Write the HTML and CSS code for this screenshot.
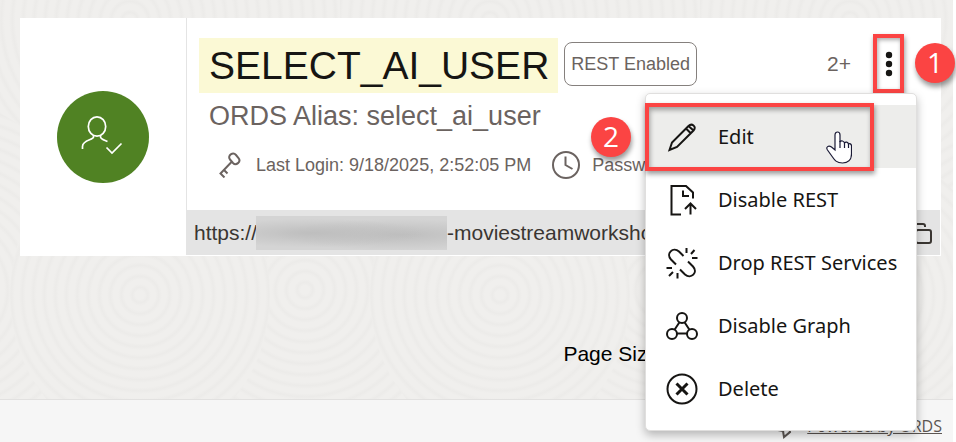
FILE: index.html
```html
<!DOCTYPE html>
<html lang="en">
<head>
<meta charset="utf-8">
<title>Database Users</title>
<link rel="stylesheet" href="styles.css">
</head>
<body>
<div class="page">
  <svg class="texture" aria-hidden="true">
    <defs>
      <radialGradient id="ring" gradientUnits="userSpaceOnUse" cx="150" cy="80" r="11" spreadMethod="repeat">
        <stop offset="0" stop-color="#f0efed"/><stop offset=".4" stop-color="#f0efed"/><stop offset=".7" stop-color="#ecebe9"/><stop offset="1" stop-color="#f0efed"/>
      </radialGradient>
      <pattern id="rings" width="360" height="440" patternUnits="userSpaceOnUse" x="-20" y="0">
        <rect width="360" height="440" fill="#efeeec"/>
        <g fill="url(#ring)">
          <rect width="360" height="440" transform="translate(0 -60)"/>
          <ellipse cx="150" cy="80" rx="170" ry="170" transform="translate(175 210)"/>
          <ellipse cx="150" cy="80" rx="150" ry="190" transform="translate(-185 210)"/>
          <ellipse cx="150" cy="80" rx="130" ry="150" transform="translate(10 215)"/>
        </g>
      </pattern>
    </defs>
    <rect width="100%" height="100%" fill="url(#rings)"/>
  </svg>
  <main class="content">
    <article class="card">
      <div class="portrait">
        <svg class="avatar" viewBox="0 0 92 92" fill="none" stroke="#fff" stroke-width="1.7" role="img" aria-label="Enabled user">
          <circle cx="46" cy="46" r="46" fill="#508223" stroke="none"/>
          <ellipse cx="40" cy="35.500" rx="8.700" ry="9.700"/>
          <path d="M36.500 44.500v1.500c0 3-11 3-11 9.500V58M43.500 44.500v1.500c0 2 3.500 3 7 4.500M49.500 56.500l5.500 5.500 9.500-9.500"/>
        </svg>
      </div>
      <div class="details">
        <div class="summary">
          <header class="heading">
            <h1>SELECT_AI_USER</h1>
            <span class="badge">REST Enabled</span>
            <span class="count">2+</span>
            <div class="actions">
              <button class="more" aria-label="Actions">
                <svg width="8" height="26" viewBox="0 0 8 26" fill="#161513"><circle cx="4" cy="4" r="3.200"/><circle cx="4" cy="13" r="3.200"/><circle cx="4" cy="22" r="3.200"/></svg>
              </button>
              <span class="marker marker-one">1</span>
              <div class="menu">
                <button class="item active">
                  <svg viewBox="0 0 32 32"><path d="M3.500 29l2.500-7.500L22.500 5q2.500-2.500 5-.5t0 5L11 26zM20 7.500l5 5M22.500 5l5 4.500"/></svg>Edit
                </button>
                <button class="item">
                  <svg viewBox="0 0 32 32"><path d="M15 30.500H5.500V2H20l7 6.500v6M17 6.500V12h6M24.500 30.500V19.500M19 25l5.500-5.500L30 25"/></svg>Disable REST
                </button>
                <button class="item">
                  <svg viewBox="0 0 32 32"><path d="M10 17.500L5 12.500C-.5 6.500 7-.5 13 4.500l4.500 4.500M22 14.500l5 5c5.500 6-2 13-8 8l-5-5M20.500 1v5M28.500 3l-3.500 4M26 11h5.500M.500 21H6M7 25l-4 4M11.500 26v5.500"/></svg>Drop REST Services
                </button>
                <button class="item">
                  <svg viewBox="0 0 32 32"><circle cx="16" cy="8" r="5"/><circle cx="6" cy="24" r="5"/><circle cx="26" cy="24" r="5"/><path d="M13.300 12.500L8.700 19.500M18.700 12.500l4.600 7M11 23.500h10"/></svg>Disable Graph
                </button>
                <button class="item">
                  <svg viewBox="0 0 32 32"><circle cx="16" cy="16" r="14.500"/><path class="heavy" d="M10.500 10.500l11 11M21.500 10.500l-11 11"/></svg>Delete
                </button>
                <span class="frame"></span>
                <span class="marker marker-two">2</span>
                <svg class="pointer" viewBox="0 0 26 33"><path d="M9 19V4c0-4 5-4 5 0v7c1-2 4-1 4.500 1 1-1.500 3.500-1 4 1 1-1 3 0 3 2v8c0 6-4 9-9 9-6 0-8-3-10-6l-5-7c-2-3 1-5 4-3z" fill="#fff" stroke="#1a1a35" stroke-width="1.200"/><path d="M14 10v7M18.500 12v5M22.500 13v4" fill="none" stroke="#1a1a35" stroke-width="1.200"/></svg>
              </div>
            </div>
          </header>
          <p class="alias">ORDS Alias: select_ai_user</p>
          <div class="facts">
            <svg class="key" viewBox="0 0 22 26"><path d="M11 7.500c-3-4 3-8 6-4.500l2.500 3c3 4-2.500 8-5.500 5zM12.500 10L1.500 21.500l4 4M5 18l3.500 3.500"/></svg>
            <span class="login">Last Login: 9/18/2025, 2:52:05 PM</span>
            <svg class="clock" viewBox="0 0 28 28"><circle cx="14" cy="14" r="13"/><path d="M13.500 5.500V14l7 4"/></svg>
            <span>Password</span>
          </div>
        </div>
        <div class="url">
          <span class="scheme">https://</span><span class="redacted"></span><span>-moviestreamworkshop</span>
          <button class="copy" aria-label="Copy URL"><svg viewBox="0 0 24 24"><rect x="7" y="9" width="15" height="13" rx="2"/><path d="M5 16H3q-2 0-2-2V5q0-2 2-2h11q2 0 2 2v1"/></svg></button>
        </div>
      </div>
    </article>
    <p class="pager">Page Size:</p>
  </main>
  <footer class="footer">
    <svg viewBox="0 0 18 20"><path d="M3 11l5 1 1 6 6-5-1-5M4 8l4 4 6-6"/></svg>
    <a href="#">Powered by ORDS</a>
  </footer>
</div>
</body>
</html>
```
FILE: styles.css
```css
* { box-sizing: border-box; }
body {
  margin: 0;
  background: #fff;
  color: #161513;
  font-family: "Liberation Sans", Arial, sans-serif;
}
h1, p { margin: 0; font-weight: 400; }
button { border: 0; padding: 0; background: none; font: inherit; color: inherit; }
svg { flex: none; }

.page {
  position: relative;
  display: flex;
  flex-direction: column;
  min-height: 100vh;
  margin-right: 3px;
  background: #efeeec;
}
.texture { position: absolute; inset: 0; width: 100%; height: 100%; }
.content { position: relative; z-index: 1; flex: 1; padding: 18px 12px 0 20px; }

.card { display: flex; background: #fff; padding: 0 1px 1px 0; }
.portrait {
  display: flex;
  flex: none;
  align-items: center;
  justify-content: center;
  width: 167px;
  border-right: 1px solid #e4e4e4;
}
.avatar { width: 92px; height: 92px; }
.details { flex: 1; min-width: 0; }
.summary { padding: 16px 36px 19px 12px; color: #6b6360; white-space: nowrap; }
.heading { display: flex; align-items: center; height: 59px; }
h1 {
  margin-top: 4px;
  padding: 0 9px 0 10px;
  background: #fbf9d5;
  color: #161513;
  font-size: 39px;
  line-height: 55px;
}
.badge {
  margin: 0 auto 0 6px;
  padding: 0 6px;
  border: 1px solid #85807d;
  border-radius: 8px;
  font-size: 18px;
  line-height: 42px;
}
.count { margin-right: 22px; font-size: 21px; }

.actions { position: relative; }
.more {
  display: flex;
  align-items: center;
  justify-content: center;
  width: 31px;
  height: 59px;
  border: 4px solid #fb4443;
  box-shadow: 1px 3px 5px #0006, inset 1px 2px 4px #0005;
}
.marker {
  position: absolute;
  width: 40px;
  height: 40px;
  border-radius: 50%;
  background: #fb4443;
  box-shadow: 1px 4px 5px #0006;
  color: #fff;
  font: 28px/38px "Open Sans", sans-serif;
  text-align: center;
}
.marker-one { top: 9px; left: 42px; }
.marker-two { top: 23px; left: -55px; }

.menu {
  position: absolute;
  top: 59px;
  right: -13px;
  width: 272px;
  padding: 11px 0 10px;
  border: 1px solid #e0dfde;
  border-radius: 5px;
  background: #fff;
  box-shadow: 0 4px 10px #0004;
  color: #161513;
}
.item {
  display: flex;
  align-items: center;
  gap: 20px;
  width: 100%;
  height: 63px;
  padding: 0 20px;
  font: 20px "Noto Sans", sans-serif;
  white-space: nowrap;
}
.item.active { background: #ededeb; }
.item svg { width: 32px; height: 32px; fill: none; stroke: #161513; stroke-width: 2; }
.item .heavy { stroke-width: 3; }
.frame {
  position: absolute;
  top: 9px;
  left: -1px;
  width: 229px;
  height: 68px;
  border: 4px solid #fb4443;
  box-shadow: 1px 3px 5px #0006, inset 1px 3px 5px #0005;
}
.pointer { position: absolute; top: 37px; left: 180px; width: 26px; height: 33px; }

.alias { padding-left: 10px; font-size: 27px; line-height: 46px; }
.facts { display: flex; align-items: center; height: 52px; padding-left: 20px; font-size: 18px; }
.facts svg { fill: none; stroke: #6b6360; stroke-width: 2; }
.key { width: 22px; height: 26px; }
.login { margin: 0 21px 0 15px; }
.facts .clock { width: 28px; height: 28px; margin-right: 12px; }

.url {
  display: flex;
  align-items: center;
  height: 45px;
  padding: 0 7px;
  background: #e4e4e4;
  color: #3a3632;
  font-size: 21px;
}
.scheme { width: 62px; }
.redacted {
  width: 191px;
  height: 34px;
  background: radial-gradient(ellipse at 30% 50%, #bebebe, transparent 60%), radial-gradient(ellipse at 75% 55%, #bebebe, transparent 60%), #d4d4d4;
}
.copy { margin-left: auto; }
.copy svg { display: block; width: 24px; height: 24px; fill: none; stroke: #3a3632; stroke-width: 2; }

.pager { padding: 83px 0 0 59%; color: #000; font-size: 21px; line-height: 30px; }

.footer {
  position: relative;
  display: flex;
  align-items: flex-start;
  justify-content: flex-end;
  gap: 14px;
  height: 43px;
  padding: 16px 11px 0;
  border-top: 1px solid #e2e1e0;
  background: #f6f6f6;
}
.footer a { color: #5c5652; font: 16px/20px "Open Sans", sans-serif; }
.footer svg { width: 18px; height: 20px; margin-top: 3px; fill: none; stroke: #5c5652; stroke-width: 2; }
```
